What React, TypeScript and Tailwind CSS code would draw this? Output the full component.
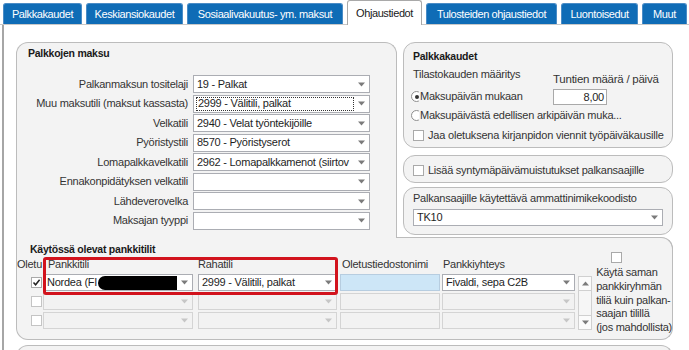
import React from 'react';

const tabs = [
  { label: 'Palkkakaudet', w: 'w-[79px]' },
  { label: 'Keskiansiokaudet', w: 'w-[97px]' },
  { label: 'Sosiaalivakuutus- ym. maksut', w: 'w-[156px]' },
  { label: 'Ohjaustiedot', w: 'w-[75px]', active: true },
  { label: 'Tulosteiden ohjaustiedot', w: 'w-[131px]' },
  { label: 'Luontoisedut', w: 'w-[77px]' },
  { label: 'Muut', w: 'w-[45px]' },
];

const payRows: { label: string; value: string; focus?: boolean }[] = [
  { label: 'Palkanmaksun tositelaji', value: '19 - Palkat' },
  { label: 'Muu maksutili (maksut kassasta)', value: '2999 - Välitili, palkat', focus: true },
  { label: 'Velkatili', value: '2940 - Velat työntekijöille' },
  { label: 'Pyöristystili', value: '8570 - Pyöristyserot' },
  { label: 'Lomapalkkavelkatili', value: '2962 - Lomapalkkamenot (siirtov' },
  { label: 'Ennakonpidätyksen velkatili', value: '' },
  { label: 'Lähdeverovelka', value: '' },
  { label: 'Maksajan tyyppi', value: '' },
];

const Arrow = ({ light, up }: { light?: boolean; up?: boolean }) => (
  <svg width="7" height="5" viewBox="0 0 7 5">
    <path d={up ? 'M0 4.5h7L3.5 0.5z' : 'M0 0.5h7L3.5 4.5z'} fill={light ? '#c6c6c6' : '#7b7b7b'} />
  </svg>
);

const Combo: React.FC<{ className: string; text?: React.ReactNode; disabled?: boolean; focus?: boolean }> = ({
  className,
  text,
  disabled,
  focus,
}) => (
  <div
    className={`flex shrink-0 border ${disabled ? 'border-[#d4d4d4] bg-[#f2f2f2]' : 'border-[#abadb3] bg-white'} ${className}`}
  >
    <div className="flex min-w-0 flex-1 items-center overflow-hidden whitespace-nowrap pl-[3px] text-[#1e1e1e]">
      {focus ? (
        <span className="my-[1px] -ml-[1px] flex flex-1 items-center self-stretch border border-dotted border-[#333] pl-[1px]">
          {text}
        </span>
      ) : (
        text
      )}
    </div>
    <div className="flex w-[15px] shrink-0 items-center justify-center">
      <Arrow light={disabled} />
    </div>
  </div>
);

const Check = ({ checked, className = '' }: { checked?: boolean; className?: string }) => (
  <div className={`flex h-[11px] w-[11px] shrink-0 items-center justify-center border border-[#a9a9a9] bg-white ${className}`}>
    {checked && (
      <svg width="9" height="9" viewBox="0 0 9 9">
        <path d="M1.5 4.5 L3.6 6.8 L7.6 1.8" stroke="#222" strokeWidth="1.5" fill="none" />
      </svg>
    )}
  </div>
);

const Radio = ({ on }: { on?: boolean }) => (
  <div className="-ml-[2px] flex h-[11px] w-[11px] shrink-0 items-center justify-center rounded-full border border-[#8f8f8f] bg-white">
    {on && <div className="h-[4px] w-[4px] rounded-full bg-[#333]" />}
  </div>
);

export default function App() {
  return (
    <div className="h-[350px] w-[689px] overflow-hidden bg-white font-['Liberation_Sans',Arial,sans-serif] text-[11px] leading-[13px] tracking-[-0.25px] text-[#333]">
      {/* Tab strip */}
      <div className="flex h-[25px] items-end gap-[4px] border-b border-[#c8c8c8] pl-[3px]">
        {tabs.map((t) =>
          t.active ? (
            <div
              key={t.label}
              className={`relative z-10 -mb-px flex h-[25px] items-center justify-center rounded-t-[3px] border border-b-0 border-[#a9a9a9] bg-white tracking-[-0.4px] text-[#1a1a1a] ${t.w}`}
            >
              {t.label}
            </div>
          ) : (
            <div
              key={t.label}
              className={`flex h-[21px] items-center justify-center rounded-t-[3px] border border-b-0 border-[#4a8cc6] bg-[#0f6cb6] tracking-[-0.4px] text-white ${t.w}`}
            >
              {t.label}
            </div>
          )
        )}
      </div>

      {/* Tab page */}
      <div className="ml-[2px] h-[325px] border-l-2 border-[#a6a6a6] pl-[12px] pt-[17px]">
        <div className="w-[657px]">
          <div className="flex h-[195px]">
            {/* Palkkojen maksu */}
            <div className="flex w-[381px] flex-col rounded-t-[12px] border border-b-0 border-[#bcbcbc] bg-[#f3f3f3] pl-[11px] pt-[4px]">
              <div className="h-[13px] text-[10.5px] font-bold text-[#1a1a1a]">Palkkojen maksu</div>
              <div className="mt-[15px] flex flex-col gap-[1.5px]">
                {payRows.map((r) => (
                  <div key={r.label} className="flex h-[18px] items-center">
                    <div className="w-[161px] whitespace-nowrap pr-[1px] text-right">{r.label}</div>
                    <Combo className="ml-[4px] h-[18px] w-[177px]" text={r.value} focus={r.focus} />
                  </div>
                ))}
              </div>
            </div>

            {/* Right column */}
            <div className="ml-[6px] flex w-[270px] flex-col pb-[2px]">
              <div className="h-[106px] rounded-[12px] border border-[#bcbcbc] bg-[#f3f3f3] pl-[9px] pt-[7px]">
                <div className="h-[13px] text-[10.5px] font-bold text-[#1a1a1a]">Palkkakaudet</div>
                <div className="mt-[5px] flex">
                  <div className="w-[140px]">
                    <div className="h-[13px] whitespace-nowrap">Tilastokauden määritys</div>
                    <div className="mt-[9px] flex h-[13px] items-center">
                      <Radio on />
                      <span className="relative -ml-[3px] whitespace-nowrap bg-[#f3f3f3] pl-[1px]">Maksupäivän mukaan</span>
                    </div>
                  </div>
                  <div className="pt-[5px]">
                    <div className="h-[13px] whitespace-nowrap text-[11.5px]">Tuntien määrä / päivä</div>
                    <div className="mt-[3px] flex h-[16px] w-[54px] items-center justify-end border border-[#a9a9a9] bg-white pr-[2px] text-[#1e1e1e]">
                      8,00
                    </div>
                  </div>
                </div>
                <div className="mt-[4px] flex h-[13px] items-center">
                  <Radio />
                  <span className="relative -ml-[3px] whitespace-nowrap bg-[#f3f3f3] pl-[1px]">
                    Maksupäivästä edellisen arkipäivän muka...
                  </span>
                </div>
                <div className="mt-[7px] flex h-[13px] items-center">
                  <Check />
                  <span className="ml-[4px] whitespace-nowrap tracking-[-0.2px]">Jaa oletuksena kirjanpidon viennit työpäiväkausille</span>
                </div>
              </div>

              <div className="mt-[7px] flex h-[28px] items-center rounded-[12px] border border-[#bcbcbc] bg-[#f3f3f3] pl-[9px] pt-[3px]">
                <Check />
                <span className="ml-[4px] whitespace-nowrap">Lisää syntymäpäivämuistutukset palkansaajille</span>
              </div>

              <div className="mt-[4px] h-[48px] rounded-[12px] border border-[#bcbcbc] bg-[#f3f3f3] pl-[9px] pt-[4px]">
                <div className="h-[13px] whitespace-nowrap">Palkansaajille käytettävä ammattinimikekoodisto</div>
                <Combo className="mt-[4px] h-[17px] w-[250px]" text="TK10" />
              </div>
            </div>
          </div>

          {/* Käytössä olevat pankkitilit */}
          <div className="relative flex h-[103px] flex-col rounded-tr-[12px] rounded-b-[12px] border border-t-0 border-[#bcbcbc] bg-[#f3f3f3]">
            <div className="flex h-0 shrink-0">
              <div className="w-[379px] shrink-0" />
              <div className="h-0 flex-1 border-t border-[#bcbcbc]" />
              <div className="-mr-px h-[12px] w-[12px] shrink-0 rounded-tr-[12px] border-r border-t border-[#bcbcbc]" />
            </div>

            <div className="flex">
              <div className="flex flex-col pt-[6px]">
                <div className="h-[13px] pl-[13px] text-[10.5px] font-bold text-[#1a1a1a]">Käytössä olevat pankkitilit</div>
                <div className="flex h-[15px] items-end whitespace-nowrap">
                  <div className="w-[26px] overflow-hidden">Oletu</div>
                  <div className="w-[150px] pl-[5px]">Pankkitili</div>
                  <div className="ml-[5px] w-[139px]">Rahatili</div>
                  <div className="ml-[3px] w-[100px] pl-[2px]">Oletustiedostonimi</div>
                  <div className="ml-[2px] w-[133px] pl-[1px]">Pankkiyhteys</div>
                </div>
                <div className="mt-[3px] flex flex-col gap-[2px]">
                  <div className="flex h-[17px]">
                    <div className="flex w-[26px] items-center justify-end pr-[1px]">
                      <Check checked />
                    </div>
                    <Combo
                      className="h-[17px] w-[150px]"
                      text={
                        <span className="flex items-center">
                          Nordea (FI
                          <span className="ml-[1px] inline-block h-[14px] w-[85px] rounded-full bg-black" />
                        </span>
                      }
                    />
                    <Combo className="ml-[5px] h-[17px] w-[139px]" text="2999 - Välitili, palkat" />
                    <div className="ml-[3px] h-[17px] w-[100px] border border-[#b7cde0] bg-[#cde6f7]" />
                    <Combo className="ml-[2px] h-[17px] w-[133px]" text="Fivaldi, sepa C2B" />
                  </div>
                  {[0, 1].map((i) => (
                    <div key={i} className="flex h-[17px]">
                      <div className="flex w-[26px] items-center justify-end pr-[1px]">
                        <Check className="border-[#c4c4c4] bg-[#f7f7f7]" />
                      </div>
                      <Combo className="h-[17px] w-[150px]" disabled />
                      <Combo className="ml-[5px] h-[17px] w-[139px]" disabled />
                      <div className="ml-[3px] h-[17px] w-[100px] border border-[#d4d4d4] bg-[#f2f2f2]" />
                      <Combo className="ml-[2px] h-[17px] w-[133px]" disabled />
                    </div>
                  ))}
                </div>
              </div>

              {/* scrollbar */}
              <div className="ml-[3px] mt-[39px] flex h-[54px] w-[15px] flex-col border border-[#d0d0d0] bg-[#f6f6f6]">
                <div className="flex h-[14px] items-center justify-center border-b border-[#d0d0d0] bg-[#fbfbfb]">
                  <Arrow up />
                </div>
                <div className="flex-1" />
                <div className="flex h-[14px] items-center justify-center border-t border-[#d0d0d0] bg-[#fbfbfb]">
                  <Arrow />
                </div>
              </div>

              <div className="ml-[4px] pt-[15px]">
                <Check className="ml-[15px]" />
                <div className="mt-[3px] whitespace-nowrap leading-[13.75px]">
                  Käytä saman
                  <br />
                  pankkiryhmän
                  <br />
                  tiliä kuin palkan-
                  <br />
                  saajan tilillä
                  <br />
                  (jos mahdollista)
                </div>
              </div>
            </div>

            {/* highlight annotation */}
            <div className="absolute left-[26px] top-[20px] h-[38px] w-[295px] rounded-[3px] border-[3px] border-[#d2131d]" />
          </div>

          <div className="mt-[5px] h-[20px] rounded-t-[12px] border border-b-0 border-[#bcbcbc] bg-[#f3f3f3]" />
        </div>
      </div>
    </div>
  );
}
